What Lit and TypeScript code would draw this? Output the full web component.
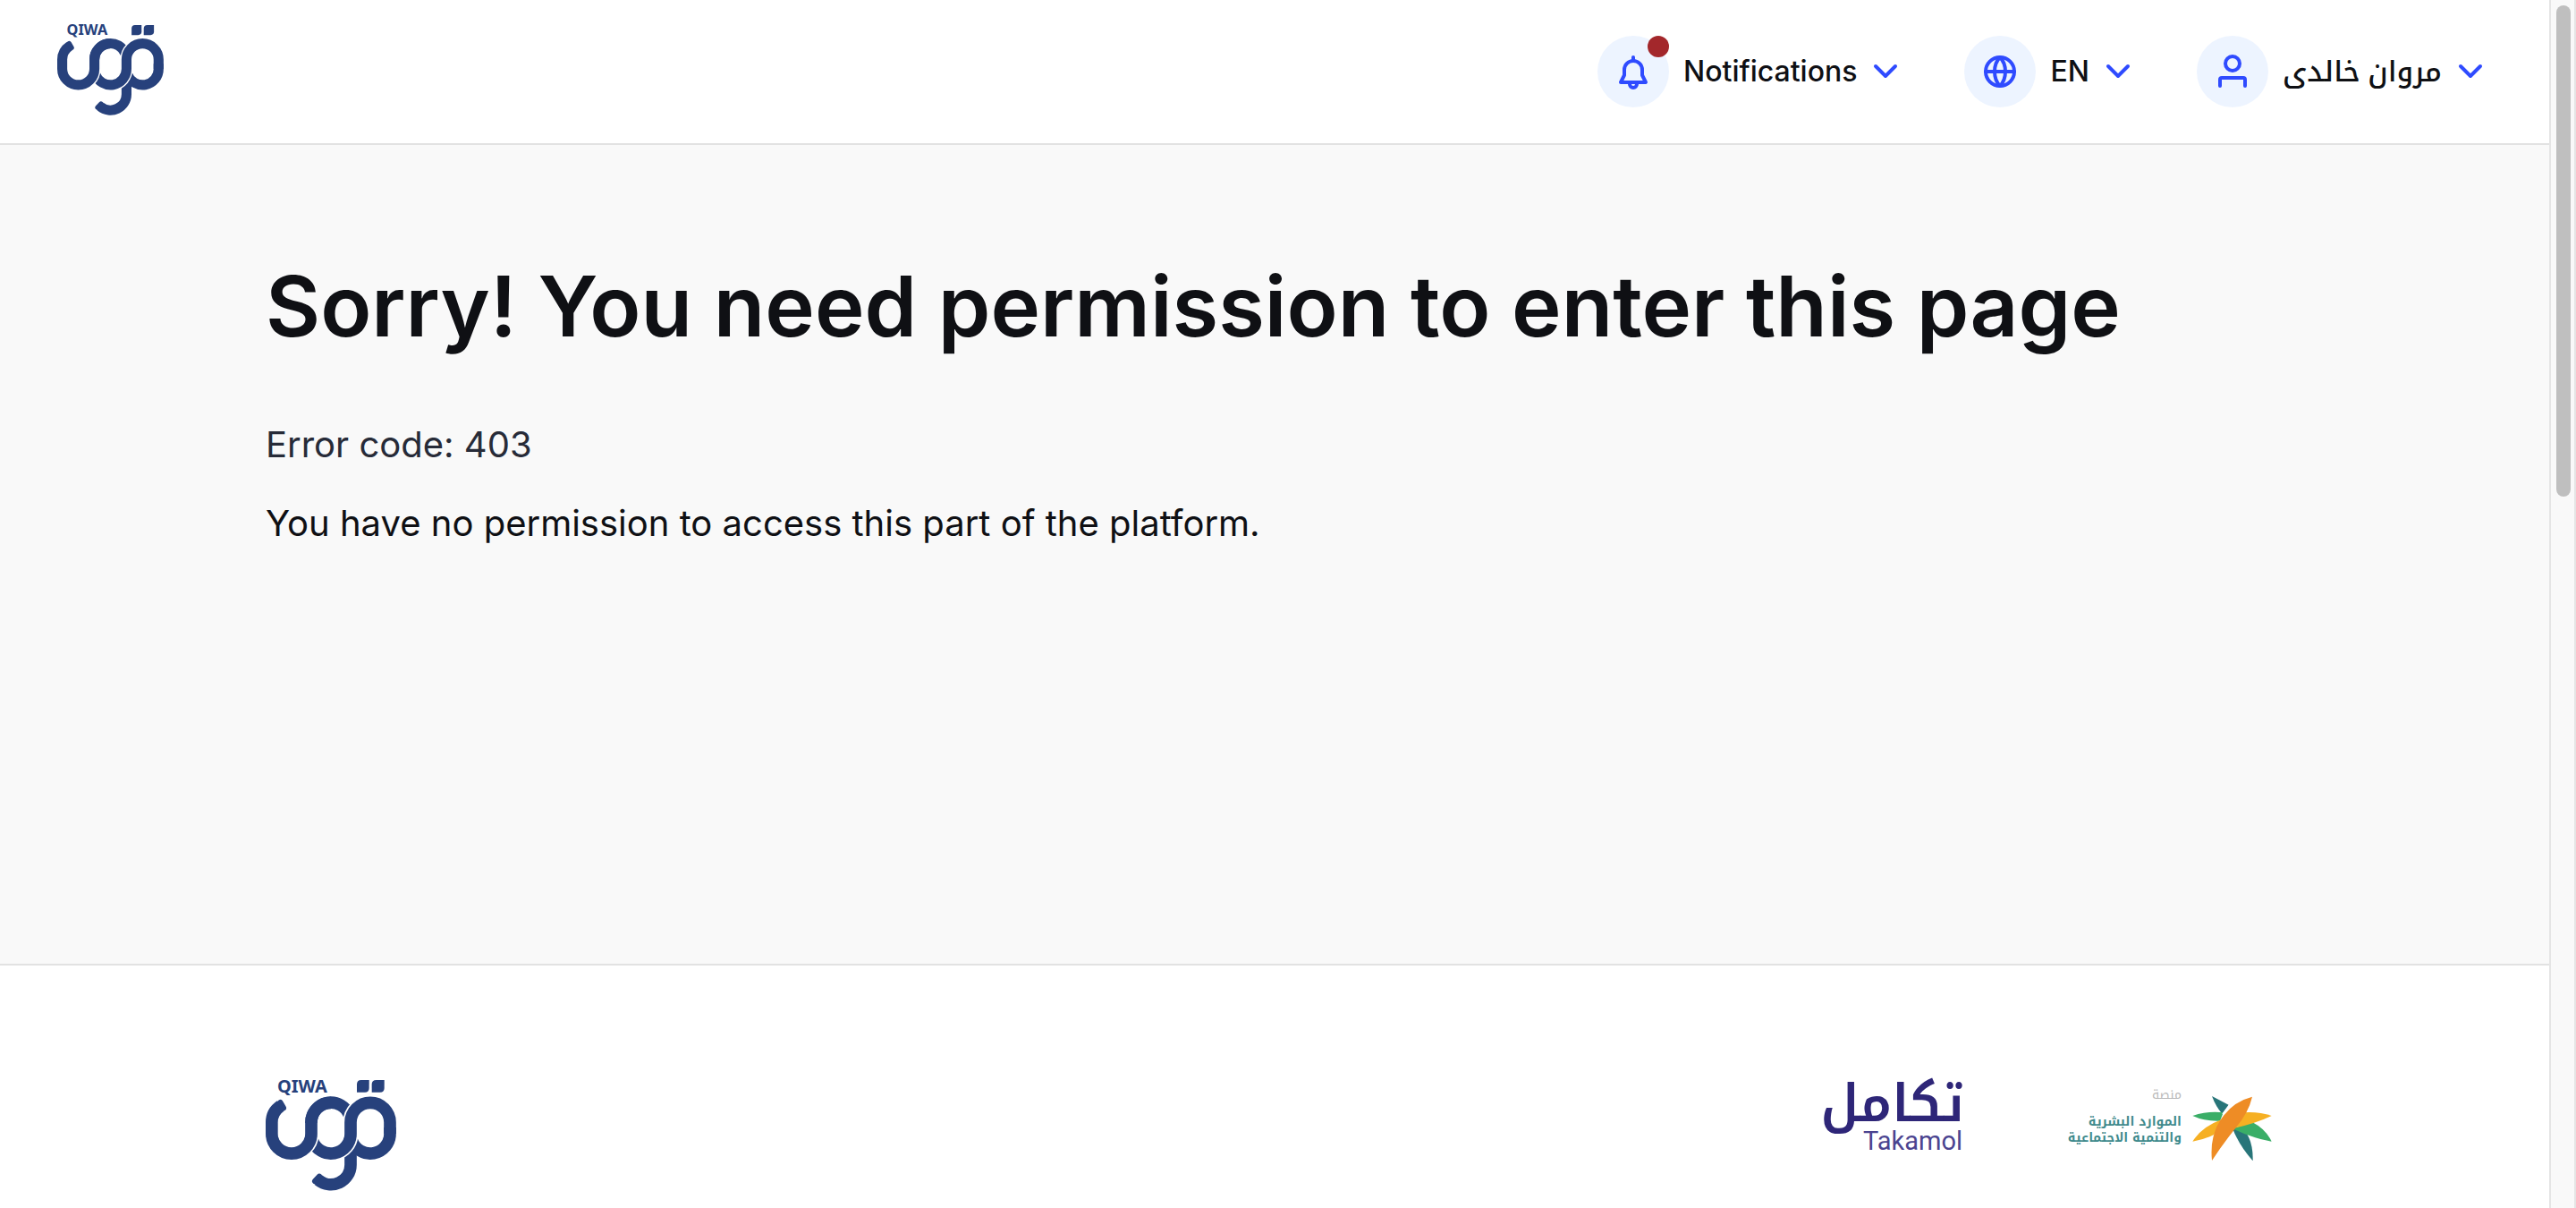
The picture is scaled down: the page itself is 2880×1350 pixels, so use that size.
import { LitElement, html, svg, css } from "lit";
import { customElement, property } from "lit/decorators.js";

@customElement("qiwa-logo")
class QiwaLogo extends LitElement {
  static styles = css`
    :host { display: block; }
    .mark { display: block; width: 100%; height: auto; overflow: visible; }
    .band { fill: none; stroke: #27417c; stroke-width: 41; }
    .gap { fill: none; stroke: #fff; stroke-width: 51; }
    .tip { stroke: #27417c; stroke-width: 20; stroke-linecap: round; }
    .dot { fill: #27417c; }
    .name { fill: #27417c; font: 700 60px "Noto Sans", "Open Sans", sans-serif; }
  `;

  render() {
    return html`
      <svg class="mark" viewBox="51 51 438 386" role="img" aria-label="Qiwa">
        <text class="name" x="90" y="93">QIWA</text>
        <path class="dot" d="M371 51H398V78Q398 92 384 92H357V65Q357 51 371 51Z" />
        <path class="dot" d="M422 51H449V78Q449 92 435 92H407V65Q407 51 422 51Z" />
        <path class="band" d="M204 195V193A66 66 0 0 1 332 170" />
        <path class="band" d="M468 210V231A66 66 0 0 1 340 254" />
        <path class="band" d="M336 282V335A66 66 0 0 1 228 386" />
        <path class="tip" d="M231 375L217 390" />
        <path class="gap" d="M208 254A66 66 0 0 0 336 231V193" />
        <path class="gap" d="M336 195V193A66 66 0 0 1 402 127" />
        <path class="band" d="M208 254A66 66 0 0 0 336 231V193A66 66 0 0 1 468 193V231" />
        <path class="gap" d="M138 297A66 66 0 0 0 204 231V215" />
        <path class="band" d="M101 138A66 66 0 0 0 71.5 193V231A66 66 0 0 0 204 231V193A66 66 0 0 1 270 127" />
        <path class="tip" d="M110 144.500L100 127" />
      </svg>
    `;
  }
}

const icons = {
  bell: svg`
    <path d="M12 4V6" />
    <path d="M5 18L7 14V11A5 5 0 0 1 17 11V14L19 18Z" />
    <path d="M10 19A2 2 0 0 0 14 19" />`,
  globe: svg`
    <circle cx="12" cy="12" r="8" />
    <path d="M4 12H20M12 4C8 8 8 16 12 20C16 16 16 8 12 4Z" />`,
  user: svg`
    <circle cx="12" cy="7.500" r="4" />
    <path d="M5 20V16.500A1 1 0 0 1 6 15.500H18A1 1 0 0 1 19 16.500V20" />`,
};

@customElement("nav-item")
class NavItem extends LitElement {
  @property() icon: keyof typeof icons = "bell";
  @property() label = "";
  @property({ type: Boolean }) unread = false;

  static styles = css`
    :host { display: block; }
    .item {
      display: flex;
      align-items: center;
      padding: 0;
      border: 0;
      background: none;
      color: #0f1014;
      font: 500 32px/40px Inter, "Noto Kufi Arabic", "DejaVu Sans", sans-serif;
      cursor: pointer;
    }
    .badge {
      position: relative;
      display: grid;
      place-items: center;
      width: 80px;
      height: 80px;
      margin-right: 16px;
      border-radius: 50%;
      background: #edf4ff;
    }
    .dot {
      position: absolute;
      top: 0;
      right: 0;
      width: 24px;
      height: 24px;
      border-radius: 50%;
      background: #a3272b;
    }
    .glyph {
      width: 48px;
      height: 48px;
      fill: none;
      stroke: #2f4bff;
      stroke-width: 2;
      stroke-linecap: round;
      stroke-linejoin: round;
    }
    .chevron { margin-left: 8px; }
  `;

  render() {
    return html`
      <button class="item" type="button" aria-haspopup="true">
        <span class="badge">
          <svg class="glyph" viewBox="0 0 24 24" aria-hidden="true">${icons[this.icon]}</svg>
          ${this.unread ? html`<span class="dot"></span>` : null}
        </span>
        <span class="label">${this.label}</span>
        <svg class="glyph chevron" viewBox="0 0 24 24" aria-hidden="true">
          <path d="M6.500 9L12 14.500L17.500 9" />
        </svg>
      </button>
    `;
  }
}

@customElement("app-root")
class AppRoot extends LitElement {
  static styles = css`
    :host {
      display: grid;
      grid-template-columns: 1fr 30px;
      height: 100vh;
      overflow: hidden;
      background: #fff;
      color: #0f1014;
      font-family: Inter, "Liberation Sans", sans-serif;
    }
    .page { min-width: 0; overflow: hidden; }
    .header {
      display: flex;
      align-items: center;
      justify-content: space-between;
      min-height: 160px;
      padding: 0 64px;
      border-bottom: 2px solid #e2e2e2;
    }
    .brand { width: 119px; }
    .nav { display: flex; gap: 64px; }
    .main {
      padding: 120px 297px 464px;
      background: #f9f9f9;
      border-bottom: 2px solid #e2e2e2;
    }
    .title { margin: 0 0 67px; font-size: 94px; line-height: 120px; font-weight: 600; }
    .text { margin: 0 0 32px; font-size: 40px; line-height: 56px; font-weight: 400; }
    .text:last-child { margin-bottom: 0; }
    .code { color: #272b38; }
    .footer {
      display: flex;
      justify-content: space-between;
      align-items: flex-start;
      padding: 128px 310px 64px 297px;
    }
    .footer-brand { width: 146px; }
    .partners { display: flex; gap: 118px; }
    .takamol { display: block; width: 150px; height: 78px; overflow: visible; }
    .takamol-ar { fill: #2e2678; font: 600 58px "Noto Kufi Arabic", "DejaVu Sans", sans-serif; }
    .takamol-en { fill: #4b4490; font: 400 29px Roboto, sans-serif; }
    .ministry { display: flex; gap: 12px; padding-top: 8px; }
    .ministry-name {
      direction: rtl;
      color: #3f8a8c;
      font: 700 14px/18px "Noto Kufi Arabic", "Noto Sans Arabic", "DejaVu Sans", sans-serif;
    }
    .ministry-name span { display: block; white-space: nowrap; }
    .ministry-name .kind { margin-bottom: 12px; color: #b9b9b9; font-weight: 400; }
    .star { display: block; width: 89px; height: 72px; margin-top: 10px; }
    .scrollbar {
      box-sizing: border-box;
      padding: 6px 4px 6px 6px;
      border: solid #e5e5e5;
      border-width: 0 2px;
      background: #f9f9f9;
    }
    .thumb { height: 41%; border-radius: 8px; background: #bfbfbf; }
  `;

  render() {
    return html`
      <div class="page">
        <header class="header">
          <a class="brand" href="#"><qiwa-logo></qiwa-logo></a>
          <nav class="nav">
            <nav-item icon="bell" label="Notifications" unread></nav-item>
            <nav-item icon="globe" label="EN"></nav-item>
            <nav-item icon="user" label="مروان خالدى" lang="ar"></nav-item>
          </nav>
        </header>
        <main class="main">
          <h1 class="title">Sorry! You need permission to enter this page</h1>
          <p class="text code">Error code: 403</p>
          <p class="text">You have no permission to access this part of the platform.</p>
        </main>
        <footer class="footer">
          <qiwa-logo class="footer-brand"></qiwa-logo>
          <div class="partners">
            <svg class="takamol" viewBox="0 0 150 78" role="img" aria-label="Takamol">
              <text class="takamol-ar" x="152" y="46" text-anchor="end">تكامل</text>
              <text class="takamol-en" x="150" y="78" text-anchor="end">Takamol</text>
            </svg>
            <div class="ministry">
              <div class="ministry-name" lang="ar">
                <span class="kind">منصة</span>
                <span>الموارد البشرية</span>
                <span>والتنمية الاجتماعية</span>
              </div>
              <svg class="star" viewBox="484 75 265 216" aria-hidden="true">
                <path fill="#287579" d="M549 75L606 105L583 134Q562 110 549 75Z" />
                <path fill="#287579" d="M618 183L650 178Q688 220 686 292Q640 240 618 183Z" />
                <path fill="#3aae67" d="M484 141Q535 124 587 130L576 158Q525 160 484 141Z" />
                <path fill="#3aae67" d="M618 184L684 162Q730 186 749 227Q680 215 618 184Z" />
                <path fill="#f6b023" d="M484 227Q515 178 580 154L556 204Q525 220 484 227Z" />
                <path fill="#f6b023" d="M749 141Q700 124 640 131L618 184Q700 165 749 141Z" />
                <path fill="#fff" d="M583 134L608 100L616 110L592 140Z" />
                <path fill="#ee8c25" d="M549 291Q540 200 588 140Q625 92 684 77Q672 130 628 182Q582 240 549 291Z" />
              </svg>
            </div>
          </div>
        </footer>
      </div>
      <div class="scrollbar" aria-hidden="true"><div class="thumb"></div></div>
    `;
  }
}
